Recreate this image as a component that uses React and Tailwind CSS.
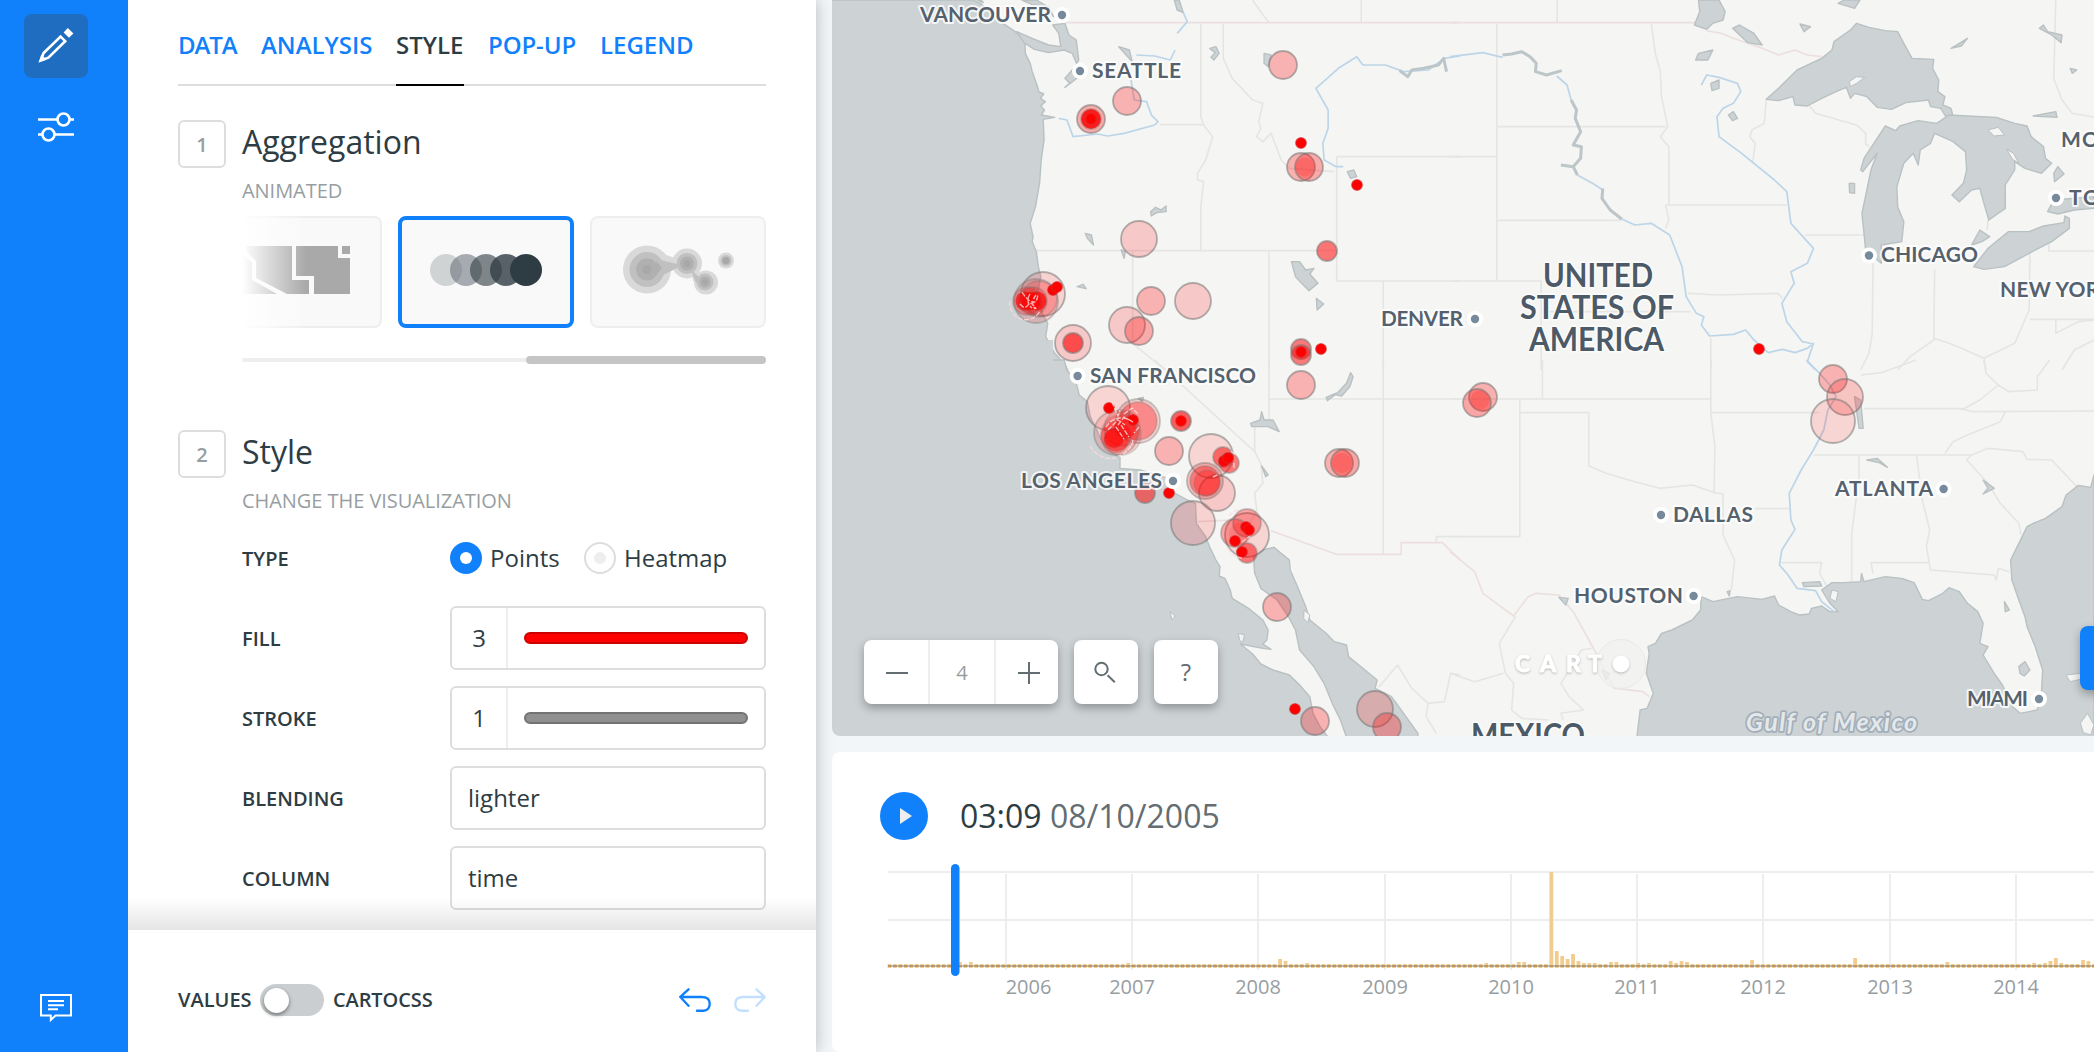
import React from "react";

const TABS = [
  ["DATA", "w-[59px] tracking-[-1.1px]"],
  ["ANALYSIS", "w-[111px]"],
  ["STYLE", "w-[68px]"],
  ["POP-UP", "w-[88px] tracking-[-0.1px]"],
  ["LEGEND", ""],
];

function PencilIcon() {
  return (
    <svg className="size-9" viewBox="0 0 36 36" fill="none" stroke="#fff" strokeWidth="2.6">
      <path d="M22.6 9.6 27.2 14.2 10.4 30.6 2.8 33.4 5.6 26Z" />
      <path d="M25.6 5.4 29.8 1 35.4 6.4 31 10.8Z" fill="#fff" stroke="none" />
      <path d="M0.6 35.6 3.4 27.6 8.4 32.8Z" fill="#fff" stroke="none" />
    </svg>
  );
}

function SlidersIcon() {
  return (
    <svg className="h-[30px] w-9" viewBox="0 0 36 30" fill="none" stroke="#fff" strokeWidth="2.6">
      <path d="M0 7.5H19M32 7.5H36M0 22.5H4M17 22.5H36" />
      <circle cx="25.5" cy="7.5" r="6" />
      <circle cx="10.5" cy="22.5" r="6" />
    </svg>
  );
}

function CommentIcon() {
  return (
    <svg className="h-[29px] w-8" viewBox="0 0 32 29" fill="none" stroke="#fff" strokeWidth="2">
      <path d="M1 1H31V21.5H15.5L10.8 26V21.5H1Z" />
      <path d="M8 7H24M8 11.3H24M8 15.2H18" />
    </svg>
  );
}

function UndoIcon({ className }) {
  return (
    <svg className={className} viewBox="0 0 32 24" fill="none" stroke="#1181fb" strokeWidth="2.4" strokeLinecap="round">
      <path d="M9.5 1.3 1.3 9 9.5 17.8M1.8 9H22.5C28 9 30.7 11.6 30.7 15.6 30.7 19.8 28.4 22.7 24.6 22.7H18" />
    </svg>
  );
}

function StepNumber({ children }) {
  return (
    <div className="mr-4 flex size-12 shrink-0 items-center justify-center rounded-md border-2 border-[#ddd] pt-0.5 text-[20px] font-semibold text-[#979ea1]">
      {children}
    </div>
  );
}

function Section({ n, title, subtitle }) {
  return (
    <div className="flex">
      <StepNumber>{n}</StepNumber>
      <div>
        <div className="h-12 text-[32px] leading-[43px] text-[#2e3c43]">{title}</div>
        <div className="mt-[9px] h-7 text-[20px] leading-7 tracking-[-0.05px] text-[#979ea1]">{subtitle}</div>
      </div>
    </div>
  );
}

function Row({ label, children }) {
  return (
    <div className="mb-4 flex h-16 items-center">
      <div className="w-[208px] pt-0.5 text-[20px] font-semibold">{label}</div>
      <div className="flex h-16 w-[316px] items-center rounded-md border-2 border-[#ddd] text-[24px]">{children}</div>
    </div>
  );
}

function Swatch({ value, color }) {
  return (
    <>
      <div className="flex h-full w-14 items-center justify-center border-r-2 border-[#eee]">{value}</div>
      <div className={"ml-4 h-3 w-56 rounded-md border-2 " + color} />
    </>
  );
}

function Cards() {
  return (
    <div className="relative ml-16 mt-[11px] flex h-28 w-[524px] gap-4">
      <div className="h-28 w-[140px] shrink-0 rounded-r-lg border-2 border-l-0 border-[#eee] bg-[#f9f9f9]">
        <svg className="mt-7 h-12 w-[108px]" viewBox="0 0 108 48" fill="#a9a9a9">
          <path d="M4 0H50V34H67V48H45L14 32V15L4 5Z" />
          <path d="M0 7 10 17V34L35 48H0Z" />
          <path d="M54 0H96V12H108V48H72V30H54ZM100 0H108V8H100Z" />
        </svg>
      </div>
      <div className="flex h-28 w-44 items-center justify-center rounded-lg border-4 border-[#1181fb] bg-[#f9f9f9]">
        <svg className="-mt-1 h-8 w-28" viewBox="0 0 112 32">
          <circle cx="16" cy="16" r="16" fill="#cfd3d4" />
          <circle cx="36" cy="16" r="16" fill="#67727a" fillOpacity=".58" />
          <circle cx="56" cy="16" r="16" fill="#3a454b" fillOpacity=".64" />
          <circle cx="76" cy="16" r="16" fill="#334047" fillOpacity=".82" />
          <circle cx="96" cy="16" r="16" fill="#2e3c43" />
        </svg>
      </div>
      <div className="flex h-28 w-44 items-center rounded-lg border-2 border-[#eee] bg-[#f9f9f9]">
        <svg className="-mt-1 ml-[31px] h-[50px] w-28" viewBox="0 0 112 50">
          <g fill="#d9d9d9">
            <path d="M40 9 52 13V23L40 31ZM68 20 76 28 82 36H70Z" />
            <circle cx="24" cy="24.5" r="24" />
            <circle cx="64" cy="18.5" r="15" />
            <circle cx="83" cy="37.5" r="12" />
            <circle cx="103" cy="15.5" r="8" />
          </g>
          <g fill="#c0c0c0">
            <path d="M38 15 54 19V23L38 31ZM68 25 78 34 73 38Z" />
            <circle cx="24" cy="24.5" r="17.5" />
            <circle cx="64" cy="18.5" r="10.5" />
            <circle cx="82" cy="37" r="8.5" />
            <circle cx="103" cy="15.5" r="5.5" />
          </g>
          <g fill="#b0b0b0">
            <path d="M33 16 39 23 33 30Z" />
            <circle cx="24" cy="24.5" r="11" />
            <circle cx="64" cy="18.5" r="7" />
            <circle cx="82" cy="37" r="5.5" />
          </g>
          <g fill="#a8a8a8">
            <circle cx="24" cy="24.5" r="4.5" />
            <circle cx="64" cy="18.5" r="3.5" />
            <circle cx="82" cy="37" r="2.8" />
            <circle cx="103" cy="15.5" r="3.5" />
          </g>
        </svg>
      </div>
      <div className="absolute left-0 top-0 h-full w-16 bg-gradient-to-r from-white to-white/0" />
    </div>
  );
}

function EditorPanel() {
  return (
    <section className="relative z-10 flex w-[688px] shrink-0 flex-col bg-white text-[#2e3c43] shadow-[0_0_16px_rgba(0,0,0,0.25)]">
      <div className="relative h-[930px] overflow-hidden px-[50px]">
        <nav className="flex h-[86px] gap-6 whitespace-nowrap border-b-2 border-[#ddd] text-[24px] font-semibold">
          {TABS.map(([t, w]) => (
            <div
              key={t}
              className={
                w +
                (t === "STYLE"
                  ? " h-[86px] border-b-2 border-black pt-7 leading-[34px] text-[#2e3c43]"
                  : " pt-7 leading-[34px] text-[#1181fb]")
              }
            >
              {t}
            </div>
          ))}
        </nav>
        <div className="h-[34px]" />
        <Section n="1" title="Aggregation" subtitle="ANIMATED" />
        <Cards />
        <div className="ml-16 mt-7 flex h-2 w-[524px] items-center">
          <div className="h-1 w-[284px] rounded-l bg-[#eee]" />
          <div className="h-2 w-60 rounded bg-[#c5c5c5]" />
        </div>
        <div className="h-[66px]" />
        <Section n="2" title="Style" subtitle="CHANGE THE VISUALIZATION" />
        <div className="ml-16">
          <div className="mb-8 mt-[27px] flex h-8 items-center">
            <div className="w-[208px] pt-0.5 text-[20px] font-semibold">TYPE</div>
            <div className="flex size-8 items-center justify-center rounded-full bg-[#1181fb]">
              <div className="size-3 rounded-full bg-white" />
            </div>
            <div className="ml-2 w-[94px] text-[24px] leading-8">Points</div>
            <div className="flex size-8 items-center justify-center rounded-full border-2 border-[#ddd]">
              <div className="size-3 rounded-full bg-[#eee]" />
            </div>
            <div className="ml-2 text-[24px] leading-8">Heatmap</div>
          </div>
          <Row label="FILL"><Swatch value="3" color="border-[#cc0000] bg-[#ff0000]" /></Row>
          <Row label="STROKE"><Swatch value="1" color="border-[#737373] bg-[#909090]" /></Row>
          <Row label="BLENDING"><span className="pl-4">lighter</span></Row>
          <Row label="COLUMN"><span className="pl-4">time</span></Row>
        </div>
        <div className="absolute inset-x-0 bottom-0 h-8 bg-gradient-to-t from-black/10 to-transparent" />
      </div>
      <footer className="flex grow items-center px-[50px] pb-0 pt-[18px] text-[20px] font-semibold">
        <span className="w-[82px]">VALUES</span>
        <div className="flex h-8 w-16 items-center rounded-full bg-[#caced0] pl-1">
          <div className="size-[25px] rounded-full bg-white shadow-[0_2px_4px_rgba(0,0,0,0.45)]" />
        </div>
        <span className="ml-[9px] tracking-[-0.1px]">CARTOCSS</span>
        <UndoIcon className="ml-auto h-6 w-8" />
        <UndoIcon className="ml-[23px] h-6 w-8 -scale-x-100 opacity-25" />
      </footer>
    </section>
  );
}

/* Each map tile keeps its own local coordinates. */
const TILES = {
  nw: "translate(820 0) scale(0.40816 0.33333)",
  ne: "translate(1450 0) scale(0.41071 0.33333)",
  sw: "translate(820 360) scale(0.40816 0.33333)",
  se: "translate(1450 360) scale(0.41071 0.33333)",
};

const WATER = [
  ["nw", "M0 0 375 0 395 12 425 50 460 80 482 98 502 125 503 160 515 190 520 215 533 260 536 275 548 282 540 295 552 305 541 318 550 330 542 345 575 352 547 358 549 420 542 480 538 550 528 620 515 670 522 710 520 725 530 755 535 800 541 830 535 870 545 940 558 970 553 1010 575 1060 598 1090 607 1110 0 1110Z"],
  ["nw", "M482 95 520 115 560 135 590 140 585 100 570 75 600 70 610 105 628 120 634 180 625 200 600 235 612 250 600 262 640 225 632 200 618 160 598 150 560 158 525 148 500 128Z"],
  ["nw", "M385 0 400 8 395 0ZM495 0 520 14 560 20 572 50 555 18 530 0ZM868 0 875 30 890 38 880 0ZM732 140 765 185 758 150ZM955 145 970 140 978 160 965 180 958 172 968 158ZM1088 160 1105 165 1098 200 1088 190ZM650 700 665 705 670 735 655 715ZM810 635 822 622 835 630 848 618 848 635 825 638 812 648ZM738 750 748 755 745 775ZM630 860 645 853 652 866ZM1155 785 1175 785 1190 810 1210 805 1200 822 1220 850 1198 872 1180 850 1165 830ZM1216 895 1234 912 1218 930ZM1292 515 1308 510 1315 530 1300 535Z"],
  ["ne", "M770 298 800 265 845 210 905 175 930 150 935 125 975 90 990 70 1020 82 1060 92 1090 95 1105 130 1125 175 1178 178 1175 205 1190 240 1188 275 1205 290 1200 315 1220 325 1225 350 1210 355 1195 325 1170 320 1165 300 1110 308 1075 328 1040 322 1015 290 985 280 975 295 965 262 940 275 905 295 870 318 840 315 835 290 800 302Z"],
  ["ne", "M1000 510 1008 475 1040 415 1060 378 1085 392 1095 378 1140 362 1185 370 1215 345 1260 348 1330 352 1375 370 1405 378 1415 410 1445 440 1450 475 1465 490 1440 520 1400 505 1375 485 1375 510 1352 555 1352 625 1312 660 1300 610 1290 565 1270 570 1240 605 1222 585 1250 550 1258 510 1255 455 1225 425 1180 400 1170 430 1145 450 1140 495 1128 460 1105 490 1088 560 1090 620 1105 665 1100 725 1050 735 1050 790 1012 750 1008 700 1003 640 1015 570 1025 510 1040 460 1005 515Z"],
  ["ne", "M1275 800 1310 745 1360 695 1410 695 1445 678 1495 668 1497 648 1508 655 1508 685 1465 725 1410 760 1350 800 1300 808ZM1455 635 1470 600 1568 590 1568 625 1520 630 1480 642ZM1270 735 1290 690 1314 710 1295 725Z"],
  ["ne", "M605 0 655 0 670 35 665 60 640 70 625 88 595 75 608 35ZM688 85 705 75 740 100 760 135 725 128ZM598 180 605 160 640 150 628 180ZM635 250 655 240 655 265 638 272ZM678 345 690 335 700 355 688 362ZM945 10 960 0 998 0 985 25ZM852 72 878 80 862 95ZM1435 85 1445 75 1455 95 1490 105 1488 128 1465 105ZM1220 145 1260 115 1245 138ZM1510 205 1526 210 1515 220ZM1420 348 1475 335 1478 352ZM1470 520 1480 500 1495 522 1472 545ZM972 550 985 550 985 580 973 578Z"],
  ["sw", "M0 0 598 0 605 30 628 70 635 105 655 125 662 170 680 215 700 270 735 292 735 325 785 330 845 352 870 400 900 420 920 430 922 490 945 530 955 562 970 600 980 620 978 648 992 655 1005 690 1010 715 1050 745 1085 780 1098 810 1095 840 1085 852 1105 868 1085 865 1030 852 1060 882 1080 912 1110 930 1150 945 1175 975 1200 1010 1208 1060 1225 1100 1245 1132 0 1132Z"],
  ["sw", "M1062 590 1085 570 1112 562 1150 600 1152 630 1170 680 1190 740 1200 780 1240 820 1260 845 1290 855 1295 890 1330 925 1365 960 1360 985 1400 1010 1430 1060 1465 1120 1465 1132 1290 1132 1275 1080 1255 1030 1235 970 1210 920 1175 870 1165 810 1150 775 1120 720 1080 685 1065 640Z"],
  ["sw", "M1055 190 1078 180 1082 155 1088 180 1110 180 1125 215 1098 200 1058 200ZM1240 112 1268 98 1290 70 1300 38 1306 50 1298 80 1278 108 1262 104 1243 122ZM1082 318 1098 345 1092 350ZM780 115 792 112 790 125Z"],
  ["se", "M455 1132 463 1050 480 1045 495 1000 478 940 485 880 482 860 500 850 515 820 540 810 590 780 610 750 612 710 640 725 700 710 760 718 790 708 800 735 830 755 850 765 875 762 880 745 905 738 925 755 945 755 925 730 905 690 930 668 960 668 1000 665 1002 640 1008 665 1060 650 1100 655 1130 668 1150 718 1165 722 1200 700 1215 683 1240 695 1260 730 1285 755 1298 790 1290 850 1310 860 1298 885 1325 940 1345 975 1370 1040 1388 1060 1430 1050 1440 1000 1443 930 1425 860 1405 800 1400 770 1385 720 1368 660 1365 600 1385 550 1405 500 1420 490 1450 475 1490 440 1500 405 1530 376 1560 382 1568 345 1568 1132Z"],
  ["se", "M1015 300 1040 295 1065 322 1045 308ZM1298 360 1325 385 1298 402 1310 385ZM858 668 900 665 905 678 862 680ZM1350 725 1362 750 1352 755ZM1385 920 1400 905 1412 930 1398 948 1388 940ZM985 110 1000 120 1006 205 996 205ZM265 712 288 715 282 735ZM370 930 388 940 380 960ZM675 695 682 692 680 708Z"],
];

const ISLANDS = [
  ["sw", "M1186 750 1200 765 1195 788 1185 775ZM1025 820 1040 825 1035 848 1028 840ZM858 755 870 768 862 780Z"],
  ["ne", "M972 245 990 230 1010 232 990 250 975 260ZM1310 390 1335 382 1350 405 1325 408ZM1355 448 1372 460 1385 490 1370 478Z"],
  ["se", "M1535 1090 1552 1060 1568 1095 1560 1125 1542 1118ZM1500 945 1535 940 1535 958 1510 965ZM930 690 945 695 940 725 925 715Z"],
];

const STATES = [
  ["nw", "M933 70V350L940 375 962 410 945 480 925 520 925 540 940 545 933 620V752M988 70V175L1010 235 1060 300 1085 310 1075 365 1080 385 1070 410 1085 425 1105 400 1130 480 1150 505 1260 515M832 374H940M1266 470H1568M1266 470V843H1568M530 752H1266M766 752V1030L845 1110M1100 752V1110M1380 843V1110M1060 0 1080 35 1100 68M1326 0V68"],
  ["ne", "M261 0V68M114 70V843M0 470H114M114 380H525M490 70 500 160 512 215 515 290 530 380 512 410 533 440V615L525 615 533 660 525 685M114 661H418M0 843H222M222 843V1110M533 615H820M865 705H1008M770 300 765 370 735 390 730 410 743 430 737 490M875 318 890 340 990 375 1012 400 1012 432 1022 440M580 880 655 885 798 880 810 895M222 935H585M635 1015V1110M1030 790 1028 1000 1020 1060 1000 1110M1180 808 1178 1020 1120 1070 1090 1110M1178 1015 1215 1030 1245 1045 1300 1075 1375 1030 1410 930 1412 760M1412 958H1568M1458 720V753H1568M1475 0 1470 235 1490 300 1515 340 1568 352M1475 958V1000L1530 965 1568 960M1568 1020 1520 1050 1490 1110M1300 1075 1305 1110"],
  ["sw", "M820 0 1065 275M1100 0V190M1100 117H1568M1380 0V585M1065 200V275L1080 310 1085 370 1065 400 1070 450 1055 485 1050 510M1510 548V530H1568M1370 980 1415 915 1450 985 1490 1030 1485 1070 1510 1120M1490 1030 1530 1025 1545 940 1568 945"],
  ["se", "M0 117H635M635 0V158L645 260 643 400M225 0V117M170 117V530H0M170 158H338V318L380 340 450 365 510 385 590 375 645 398 665 402V525L693 600 685 690M635 158H900M742 446H826M885 285H1270M1008 146 1250 146 1270 155 1568 153M1000 45 1050 38 1135 0M1300 0 1305 40 1335 75 1290 120 1245 150M1335 75 1360 95 1430 90 1430 50 1460 0M1352 155 1340 185 1260 225 1225 245 1205 280M996 285V350L978 520V665M1136 285 1150 420 1168 510 1160 560 1170 630 1325 645 1330 660 1335 625 1362 635M805 608H905L900 640 918 680M1030 640 1025 608H1168M1270 285 1258 300 1310 370 1340 430 1385 490 1390 525M1270 285 1310 265 1395 275 1405 298 1465 300 1525 378M160 768 120 850 135 940 155 970 150 1050 175 1075 240 1080M0 940 60 965 130 940M345 865 320 870 270 970 290 1010 325 1050 270 1060 275 1080"],
];

const BORDERS = [
  ["nw", "M600 68H1568"],
  ["ne", "M0 68H600M625 92 660 100 690 115 760 145 800 165 840 150 870 165 905 170M1310 660 1308 690"],
  ["sw", "M925 485 1010 480M1105 512 1265 583H1424V548H1525L1568 600"],
  ["se", "M0 575 60 635 80 700 155 768 190 710 210 700 265 705 300 755 345 855 385 950 400 985 470 995 485 1010"],
];

const RIVERS = [
  ["nw", "M890 38 900 65 875 100M870 150 858 180 820 168 775 165M762 240 770 300 800 305 812 345 828 365 820 375 745 400 705 408 680 402 620 410 605 360 585 355M1568 168 1530 175 1490 210 1430 215 1385 195 1330 195 1315 170 1270 205 1215 265 1245 330 1245 385 1232 430 1235 480 1265 500 1282 500"],
  ["ne", "M0 170 80 158 128 172M260 228 285 255 295 300M310 525 350 552 372 570M418 657 450 675 490 670 535 705 565 800 575 890 600 940 618 950 612 975 632 1008 690 1003 720 990 740 1020 775 1058 810 1048 840 1058 870 1045 885 1030 870 1085 890 1110M612 255 625 225 655 232 700 250 708 275 690 310 665 325 650 350 655 410 710 460 790 540 820 575 830 670 885 745 870 790 830 815 838 850 808 910 820 965 858 1025 885 1032"],
  ["se", "M868 0 900 40 925 75 940 110 920 150 910 210 885 270 855 330 826 400 830 480 840 508 808 570 802 615 820 640 845 685 890 692 905 725 935 755"],
];

const RESERVOIRS = [
  ["nw", "M1420 212 1440 230 1450 210 1480 205 1515 195 1528 175 1535 215"],
  ["ne", "M128 165 150 162 175 155 195 170 210 190 208 215 235 225 272 212M295 300 308 330 305 355 318 395 300 435 320 440 318 475 300 500 270 495M300 500 310 525M372 565 370 595 390 630 418 657"],
];

/* x, y, radius, fill opacity, optional stroke opacity */
const POINTS = [
  [1091, 119, 14, 0.3], [1091, 119, 10, 0.85, 0.35], [1127, 101, 14, 0.27], [1283, 65, 14, 0.27],
  [1301, 167, 14, 0.28], [1309, 167, 14, 0.3], [1305, 167, 9.5, 0.15, 0], [1139, 239, 18, 0.18], [1327, 251, 10, 0.52],
  [1151, 301, 14, 0.27], [1193, 301, 18, 0.18], [1127, 325, 18, 0.18], [1139, 331, 14, 0.3],
  [1073, 343, 18, 0.18], [1073, 343, 10, 0.62], [1301, 349, 10, 0.5], [1301, 355, 10, 0.5],
  [1301, 385, 14, 0.27], [1339, 463, 14, 0.28], [1345, 463, 14, 0.32], [1342, 463, 10, 0.15, 0], [1483, 397, 14, 0.28], [1477, 403, 14, 0.32], [1480, 400, 9.5, 0.15, 0],
  [1833, 379, 14, 0.27], [1845, 397, 18, 0.2], [1833, 421, 22, 0.13],
  [1043, 294, 22, 0.14], [1036, 301, 22, 0.15, 0.4], [1039, 299, 18, 0.16, 0.35], [1033, 301, 14, 0.25, 0.3],
  [1027, 301, 14, 0.25, 0.3], [1025, 301, 9.5, 0.7, 0.15], [1037, 301, 9.5, 0.7, 0.15], [1031, 301, 9.5, 0.55, 0.1],
  [1108, 408, 22, 0.13], [1138, 421, 22, 0.14, 0.4], [1138, 421, 19, 0.34, 0.3], [1116, 433, 22, 0.14, 0.4],
  [1121, 435, 20, 0.14, 0.25], [1122, 428, 18, 0.18, 0.25], [1116, 436, 15, 0.4, 0.2],
  [1116, 441, 12, 0.3, 0.25], [1114, 438, 10, 0.6, 0.15], [1125, 428, 11, 0.45, 0.1], [1181, 421, 10, 0.62], [1169, 451, 14, 0.27],
  [1211, 456, 22, 0.13], [1223, 457, 10, 0.52, 0.4], [1229, 463, 10, 0.5, 0.4],
  [1217, 493, 18, 0.18], [1205, 481, 18, 0.2, 0.45], [1205, 481, 15, 0.38, 0.35], [1207, 483, 13, 0.25, 0.2],
  [1145, 493, 10, 0.52], [1193, 523, 22, 0.14],
  [1247, 535, 22, 0.13], [1247, 523, 14, 0.32, 0.4], [1235, 533, 14, 0.32, 0.4], [1240, 534, 11, 0.12, 0], [1247, 553, 10, 0.52, 0.4],
  [1277, 607, 14, 0.27], [1315, 721, 14, 0.27], [1375, 709, 18, 0.18], [1387, 727, 14, 0.3],
];

const DOTS = [
  [1091, 119], [1301, 143], [1357, 185], [1301, 352], [1321, 349], [1759, 349], [1053, 290], [1057, 287],
  [1109, 408], [1133, 420], [1181, 421], [1224, 461], [1228, 458], [1169, 493], [1235, 541], [1246, 527], [1249, 530], [1242, 552], [1295, 709],
];

const SPARKS =
  "M1010 301a16 16 0 0 0 30 10M1022 292q5 8 10 10t6-8M1030 294q-5 8 2 14M1036 295q-6 8-1 14M1020 304q5 6 8 1t8 4M1112 402l6 14 2-6M1118 425l6-8 7 4M1124 414l8-6 6 6M1108 430l10-10 7 5M1116 427l8 12M1121 425l8 12M1106 427a18 18 0 0 1 28-4M1133 440a20 20 0 0 1-14 16M1090 446a24 24 0 0 0 26 12M1139 427l-5 6M1213 477l6-3M1229 516a20 20 0 0 1 9-6M1228 548a16 16 0 0 0 14 10M1242 542l8-6M1231 451l4 4M1234 463v6";

const LABELS = [
  ["VANCOUVER", 920, 22, 131, 1062, 15], ["SEATTLE", 1092, 78, 89, 1080, 71],
  ["SAN FRANCISCO", 1090, 383, 166, 1077.6, 376], ["LOS ANGELES", 1021, 488, 141, 1173, 481],
  ["DENVER", 1381, 326, 82, 1475, 319], ["CHICAGO", 1881, 262, 97, 1869, 255.5],
  ["TO", 2069, 205, 31, 2056, 198], ["MO", 2061, 147, 38, 0, 0], ["NEW YORK", 2000, 297, 114, 0, 0],
  ["DALLAS", 1673, 522, 80, 1661, 515], ["ATLANTA", 1835, 496, 98, 1943.6, 489],
  ["HOUSTON", 1574, 603, 109, 1693.6, 596], ["MIAMI", 1967, 706, 61, 2039, 699],
];

const BIG_LABELS = [["UNITED", 1543, 287, 110], ["STATES OF", 1520, 319, 154], ["AMERICA", 1529, 351, 135], ["MEXICO", 1471, 747, 114]];

function Layer({ items, ...rest }) {
  return (
    <g {...rest}>
      {items.map(([tile, d], i) => (
        <path key={i} d={d} transform={TILES[tile]} vectorEffect="non-scaling-stroke" />
      ))}
    </g>
  );
}

function MapDrawing() {
  return (
    <svg className="block h-[736px] w-[1262px]" viewBox="832 0 1262 736" strokeLinejoin="round">
      <rect x="832" width="1262" height="736" fill="#f5f5f3" />
      <Layer items={STATES} fill="none" stroke="#e5e5e4" strokeWidth="1.6" />
      <Layer items={BORDERS} fill="none" stroke="#ebdfdf" strokeWidth="1.6" />
      <Layer items={WATER} fill="#cdd2d4" stroke="#b9c1c3" strokeWidth="1.4" />
      <Layer items={ISLANDS} fill="#f5f5f3" stroke="#b9c1c3" strokeWidth="1" />
      <rect x="831" y="340" width="222" height="40" fill="#cdd2d4" />
      <Layer items={RIVERS} fill="none" stroke="#bcd5e8" strokeWidth="1.7" />
      <Layer items={RESERVOIRS} fill="none" stroke="#bcc5c7" strokeWidth="3" />
      <g stroke="#777" strokeWidth="1.8" fill="#f00">
        {POINTS.map(([x, y, r, o, s = 0.55], i) => (
          <circle key={i} cx={x} cy={y} r={r} fillOpacity={o} strokeOpacity={s} />
        ))}
      </g>
      <g stroke="#c33" strokeOpacity=".5" strokeWidth="1.4" fill="#f00">
        {DOTS.map(([x, y], i) => (
          <circle key={i} cx={x} cy={y} r="5.4" />
        ))}
      </g>
      <path d={SPARKS} fill="none" stroke="#ffdcdc" strokeWidth="1.4" strokeOpacity=".8" strokeDasharray="5 1.5" />
      <g fontFamily="Lato, sans-serif" fill="#55626e" stroke="#fff" strokeOpacity=".8" paintOrder="stroke">
        {LABELS.map(([t, x, y, w, cx, cy]) => (
          <g key={t}>
            {cx > 0 && <circle cx={cx} cy={cy} r="8" fill="#fff" stroke="none" />}
            {cx > 0 && <circle cx={cx} cy={cy} r="4.2" fill="#778a9b" stroke="none" />}
            <text x={x} y={y} textLength={w} fontSize="21" fontWeight="700" strokeWidth="4">{t}</text>
          </g>
        ))}
        {BIG_LABELS.map(([t, x, y, w]) => (
          <text key={t} x={x} y={y} textLength={w} fontSize="32" fontWeight="700" strokeWidth="3" fill="#4c5a67" lengthAdjust="spacingAndGlyphs">{t}</text>
        ))}
        <text x="1746" y="731" textLength="171" fontSize="25" fontWeight="700" fontStyle="italic" fill="#e3e8eb" stroke="#96a5b2" strokeWidth="3.5">Gulf of Mexico</text>
      </g>
      <circle cx="1621" cy="664" r="24.5" fill="#f1f1f0" fillOpacity=".8" stroke="#e9e9e8" strokeWidth="1" />
      <g fill="#fff" filter="drop-shadow(0 1px 1px rgba(0,0,0,.25))">
        <text x="1515 1540 1566 1588" y="672" fontFamily="Lato, sans-serif" fontWeight="900" fontSize="23" stroke="#fff" strokeWidth=".8">CART</text>
        <circle cx="1621" cy="664" r="8.5" />
      </g>
    </svg>
  );
}

const control = "flex h-16 items-center justify-center rounded-lg bg-white shadow-[0_4px_10px_rgba(0,0,0,0.3)]";

function MapView() {
  return (
    <div className="relative h-[736px] overflow-hidden rounded-bl-lg">
      <MapDrawing />
      <div className="absolute bottom-8 left-8 flex gap-4 text-[20px] text-[#636d72]">
        <div className={control + " w-[194px]"}>
          <div className="flex h-full w-[66px] items-center justify-center border-r-2 border-[#eee] pl-0.5">
            <svg className="size-6" viewBox="0 0 24 24" stroke="#636d72" strokeWidth="2"><path d="M1 13H23" /></svg>
          </div>
          <div className="flex h-full w-[66px] items-center justify-center border-r-2 border-[#eee] pt-0.5 text-[#979ea1]">4</div>
          <div className="flex h-full grow items-center justify-center pl-1">
            <svg className="size-6" viewBox="0 0 24 24" stroke="#636d72" strokeWidth="2"><path d="M1 13H23M12 2V24" /></svg>
          </div>
        </div>
        <div className={control + " w-16"}>
          <svg className="size-6" viewBox="0 0 24 24" fill="none" stroke="#636d72" strokeWidth="2">
            <circle cx="7.5" cy="9" r="6.2" /><path d="M13.6 15.2 20.8 22.2" />
          </svg>
        </div>
        <div className={control + " w-16 text-[24px]"}>?</div>
      </div>
      <div className="absolute -right-10 top-[626px] h-16 w-[54px] rounded-lg bg-[#1181fb] shadow-[0_4px_10px_rgba(0,0,0,0.3)]" />
    </div>
  );
}

const SPIKES = {
  13: 6, 15: 6, 44: 5, 72: 9, 73: 7, 77: 5, 110: 5, 116: 6, 117: 6, 122: 96, 123: 17, 124: 12, 125: 9, 126: 14, 127: 7,
  128: 5, 129: 5, 130: 5, 133: 6, 134: 6, 138: 5, 140: 5, 144: 7, 145: 5, 146: 7, 147: 6, 159: 8, 178: 10, 195: 6,
  211: 5, 213: 5, 214: 7, 215: 10, 216: 5, 220: 8, 221: 7,
};

const YEARS = [[1006, 2006], [1132, 2007], [1258, 2008], [1385, 2009], [1511, 2010], [1637, 2011], [1763, 2012], [1890, 2013], [2016, 2014]];

function Timeline() {
  return (
    <div className="h-[300px] overflow-hidden rounded-l-lg bg-white">
      <div className="flex h-[112px] items-center pl-12 pt-4">
        <div className="mr-8 flex size-12 items-center justify-center rounded-full bg-[#1181fb]">
          <svg className="ml-1 h-4 w-3" viewBox="0 0 12 16" fill="#eee"><path d="M0 0 12 8 0 16Z" /></svg>
        </div>
        <div className="text-[32px] text-[#2e3c43]">
          03:09 <span className="text-[#636d72]">08/10/2005</span>
        </div>
      </div>
      <svg className="block h-[188px] w-[1262px]" viewBox="832 864 1262 188" shapeRendering="crispEdges">
        <g fill="#eee">
          <rect x="888" y="871" width="1206" height="2" />
          <rect x="888" y="919" width="1206" height="2" />
          {YEARS.map(([x]) => <rect key={x} x={x - 1} y="874" width="2" height="96" />)}
        </g>
        <g fill="#f2cc8f" shapeRendering="auto">
          {Array.from({ length: 223 }, (_, i) => {
            const h = SPIKES[i] || 4;
            return <rect key={i} x={887.6 + i * 5.425} y={968 - h} width="3.8" height={h} />;
          })}
        </g>
        <rect x="888" y="965" width="1206" height="2" fill="#000" fillOpacity=".25" />
        <rect x="951" y="864" width="8.5" height="112" rx="4.25" fill="#1181fb" shapeRendering="auto" />
        <g fontFamily="Open Sans, sans-serif" fontSize="20" fill="#979ea1" textAnchor="middle">
          {YEARS.map(([x, y], i) => <text key={y} x={i ? x : 1028.5} y="994">{y}</text>)}
        </g>
      </svg>
    </div>
  );
}

export default function App() {
  return (
    <div className="flex h-[1052px] w-[2094px] overflow-hidden bg-[#f2f6f9] font-['Open_Sans',sans-serif]">
      <aside className="relative z-20 flex w-32 shrink-0 flex-col bg-[#1181fb] pb-[29px] pt-3.5">
        <div className="ml-6 flex size-16 items-center justify-center rounded-lg bg-[#1f6dc1] pb-0.5">
          <PencilIcon />
        </div>
        <div className="ml-[38px] mt-[34px]"><SlidersIcon /></div>
        <div className="ml-10 mt-auto"><CommentIcon /></div>
      </aside>
      <EditorPanel />
      <main className="flex w-[1278px] flex-col gap-4 pl-4">
        <MapView />
        <Timeline />
      </main>
    </div>
  );
}
